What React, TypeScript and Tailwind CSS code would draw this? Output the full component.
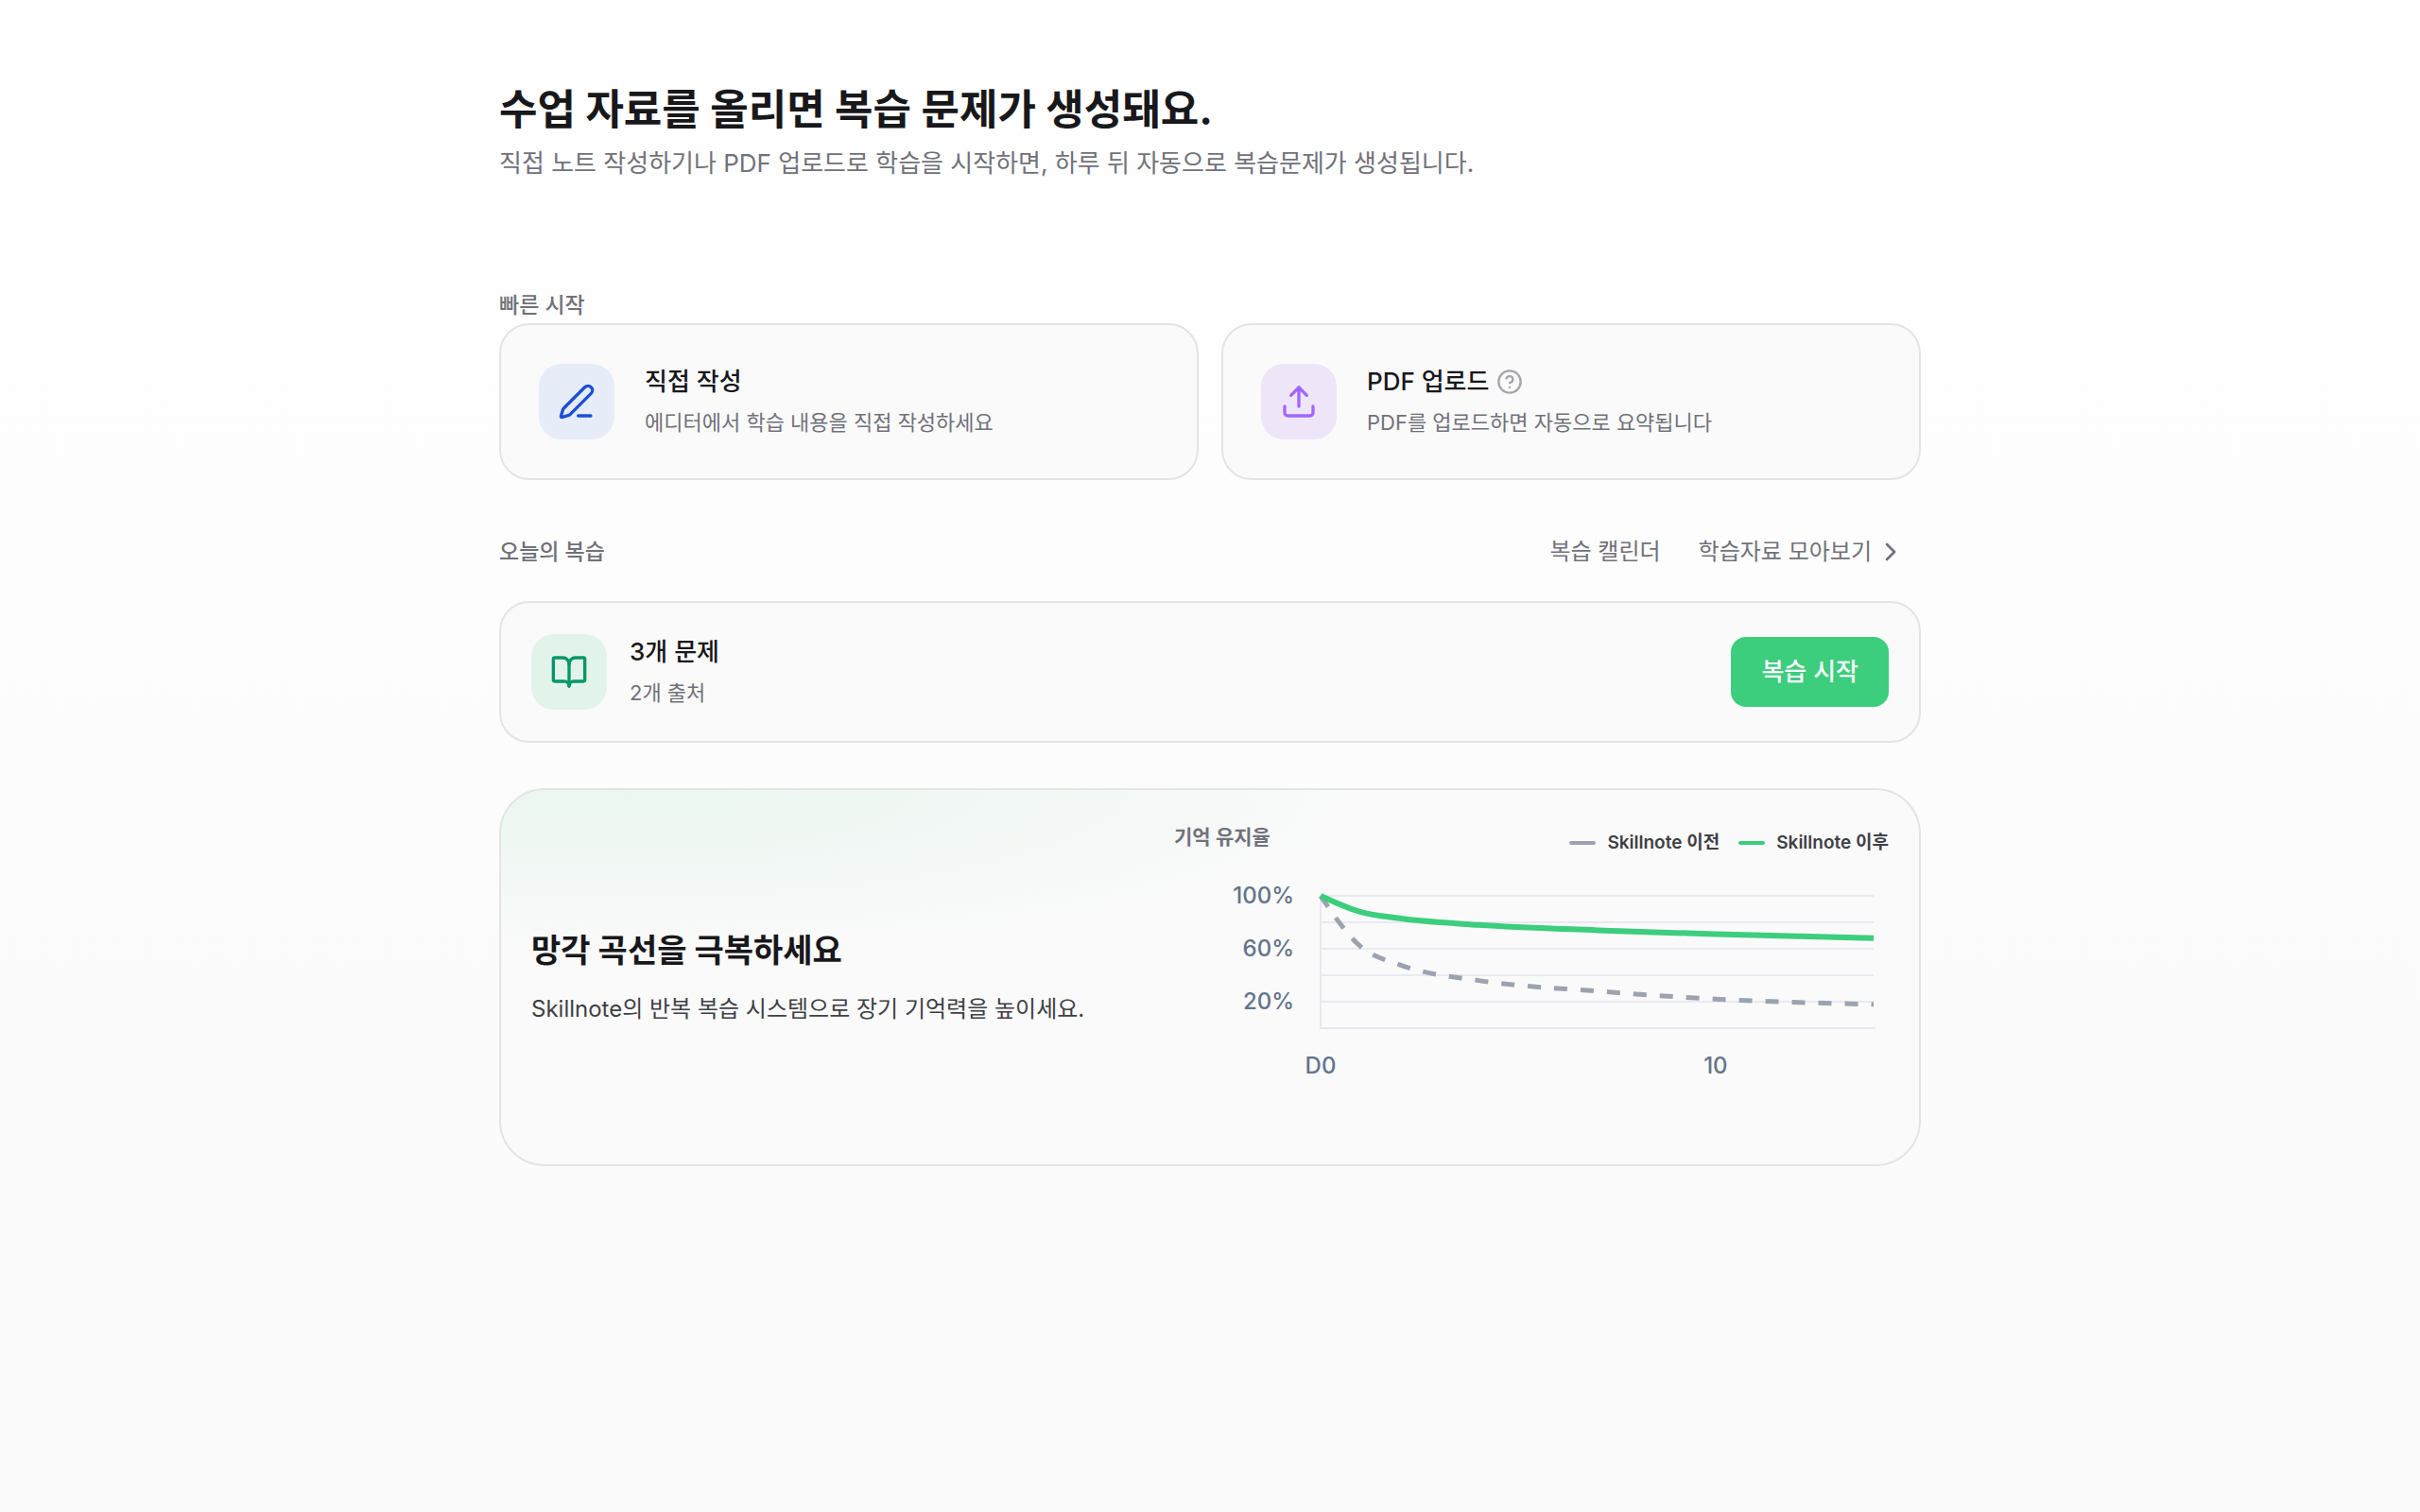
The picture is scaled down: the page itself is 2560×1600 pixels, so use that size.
import type { ReactNode } from 'react';
import { BookOpen, ChevronRight, CircleQuestionMark, PenLine, Upload } from 'lucide-react';

interface Point {
    day: number;
    rate: number;
}

const BEFORE: Point[] = [
    { day: 0, rate: 100 },
    { day: 1, rate: 62 },
    { day: 2, rate: 48 },
    { day: 4, rate: 36 },
    { day: 7, rate: 28 },
    { day: 10, rate: 22 },
    { day: 14, rate: 18 },
];

const AFTER: Point[] = [
    { day: 0, rate: 100 },
    { day: 1, rate: 88 },
    { day: 2, rate: 83 },
    { day: 4, rate: 78 },
    { day: 7, rate: 74 },
    { day: 10, rate: 71 },
    { day: 14, rate: 68 },
];

const PLOT = { left: 155, right: 740, top: 28, bottom: 168 };

const xOf = (day: number) => PLOT.left + ((PLOT.right - PLOT.left) * day) / 14;
const yOf = (rate: number) => PLOT.bottom - ((PLOT.bottom - PLOT.top) * rate) / 100;

// Monotone cubic through the points, so the curve never overshoots the data.
function monotonePath(data: Point[]) {
    const pts = data.map((p) => ({ x: xOf(p.day), y: yOf(p.rate) }));
    const last = pts.length - 1;
    const slope = (i: number) => (pts[i + 1].y - pts[i].y) / (pts[i + 1].x - pts[i].x);
    const tangents = pts.map((_, i) => {
        if (i === 0 || i === last) return 0;
        const h0 = pts[i].x - pts[i - 1].x;
        const h1 = pts[i + 1].x - pts[i].x;
        const s0 = slope(i - 1);
        const s1 = slope(i);
        const p = (s0 * h1 + s1 * h0) / (h0 + h1);
        return (Math.sign(s0) + Math.sign(s1)) * Math.min(Math.abs(s0), Math.abs(s1), 0.5 * Math.abs(p));
    });
    tangents[0] = (3 * slope(0) - tangents[1]) / 2;
    tangents[last] = (3 * slope(last - 1) - tangents[last - 1]) / 2;

    let d = `M${pts[0].x},${pts[0].y}`;
    for (let i = 0; i < last; i++) {
        const dx = (pts[i + 1].x - pts[i].x) / 3;
        d += `C${pts[i].x + dx},${pts[i].y + dx * tangents[i]},${pts[i + 1].x - dx},${pts[i + 1].y - dx * tangents[i + 1]},${pts[i + 1].x},${pts[i + 1].y}`;
    }
    return d;
}

function RetentionChart() {
    return (
        <svg viewBox="0 0 756 230" className="w-full" role="img" aria-label="기억 유지율">
            {[100, 80, 60, 40, 20].map((rate) => (
                <line key={rate} x1={PLOT.left} x2={PLOT.right} y1={yOf(rate)} y2={yOf(rate)} stroke="#e9eaf0" strokeWidth="2" />
            ))}
            <path d={`M${PLOT.left},${PLOT.top}V${PLOT.bottom}H${PLOT.right + 2}`} fill="none" stroke="#e7e8ee" strokeWidth="2" />
            <g fontSize="24" fontWeight="500" fill="#64748b">
                {[100, 60, 20].map((rate) => (
                    <text key={rate} x="127" y={yOf(rate) + 8} textAnchor="end">{rate}%</text>
                ))}
                <text x={xOf(0)} y="216" textAnchor="middle">D0</text>
                <text x={xOf(10)} y="216" textAnchor="middle">10</text>
            </g>
            <path d={monotonePath(BEFORE)} fill="none" stroke="#9ca3af" strokeWidth="5" strokeDasharray="14 14" />
            <path d={monotonePath(AFTER)} fill="none" stroke="#3ccd7d" strokeWidth="6" />
        </svg>
    );
}

interface QuickCardProps {
    icon: ReactNode;
    tile: string;
    title: string;
    desc: string;
    help?: boolean;
}

function QuickCard({ icon, tile, title, desc, help }: QuickCardProps) {
    return (
        <button className="flex items-center gap-8 rounded-[32px] border-2 border-[#e4e4e4] bg-[#fafafa] p-10 text-left">
            <span className={`flex size-20 shrink-0 items-center justify-center rounded-3xl ${tile}`}>{icon}</span>
            <span className="flex flex-col gap-1">
                <span className="flex items-center gap-2 text-[26px] leading-10 font-medium text-[#18181b]">
                    {title}
                    {help && <CircleQuestionMark className="size-7 text-[#a5a5a9]" />}
                </span>
                <span className="text-[22px] leading-[38px] text-[#71717a]">{desc}</span>
            </span>
        </button>
    );
}

export default function App() {
    return (
        <div className="min-h-screen bg-linear-to-b from-white to-[#fafafa] font-[Inter,'Noto_Sans_CJK_KR',sans-serif] text-[#18181b]">
            <main className="mx-auto w-full max-w-[1504px] pt-20">
                <header>
                    <h1 className="text-[44px] leading-[72px] font-bold">수업 자료를 올리면 복습 문제가 생성돼요.</h1>
                    <p className="text-[26px] leading-[42px] text-[#71717a]">
                        직접 노트 작성하기나 PDF 업로드로 학습을 시작하면, 하루 뒤 자동으로 복습문제가 생성됩니다.
                    </p>
                </header>

                <section className="mt-[110px]">
                    <h2 className="text-[23px] leading-[38px] font-medium text-[#71717a]">빠른 시작</h2>
                    <div className="grid grid-cols-2 gap-6">
                        <QuickCard
                            icon={<PenLine className="size-10 text-[#1d4ed8]" />}
                            tile="bg-[#e6ecf8]"
                            title="직접 작성"
                            desc="에디터에서 학습 내용을 직접 작성하세요"
                        />
                        <QuickCard
                            icon={<Upload className="size-10 text-[#9f67ff]" />}
                            tile="bg-[#efe5f9]"
                            title="PDF 업로드"
                            desc="PDF를 업로드하면 자동으로 요약됩니다"
                            help
                        />
                    </div>
                </section>

                <section className="mt-12">
                    <div className="flex items-center justify-between">
                        <h2 className="text-[23px] leading-10 font-medium text-[#71717a]">오늘의 복습</h2>
                        <nav className="flex gap-2 text-2xl leading-[56px] text-[#71717a]">
                            <a href="#calendar" className="px-4">복습 캘린더</a>
                            <a href="#materials" className="flex items-center gap-1 px-4">
                                학습자료 모아보기
                                <ChevronRight className="size-8" />
                            </a>
                        </nav>
                    </div>
                    <div className="mt-6 flex items-center gap-6 rounded-[32px] border-2 border-[#e4e4e4] bg-[#fafafa] p-8">
                        <span className="flex size-20 shrink-0 items-center justify-center rounded-3xl bg-[#e2f4ea]">
                            <BookOpen className="size-10 text-[#059669]" />
                        </span>
                        <div className="flex-1">
                            <div className="text-[26px] leading-10 font-medium">3개 문제</div>
                            <div className="mt-1 text-[22px] leading-[38px] text-[#71717a]">2개 출처</div>
                        </div>
                        <button className="h-[74px] rounded-2xl bg-[#3ccd7d] px-8 text-[26px] leading-10 font-medium text-white">
                            복습 시작
                        </button>
                    </div>
                </section>

                <section className="mt-12 flex min-h-[400px] rounded-[48px] border-2 border-[#e4e4e4] bg-[#fafafa] bg-[radial-gradient(ellipse_55%_44%_at_8%_0%,#eaf6f0,#fafafa)] px-8">
                    <div className="flex flex-1 flex-col justify-center gap-4">
                        <h2 className="text-[34px] leading-[52px] font-bold">망각 곡선을 극복하세요</h2>
                        <p className="text-2xl leading-10 text-[#3f3f46]">Skillnote의 반복 복습 시스템으로 장기 기억력을 높이세요.</p>
                    </div>
                    <div className="w-[756px] pt-8">
                        <div className="flex items-start justify-between">
                            <h3 className="text-[21px] leading-9 font-semibold text-[#71717a]">기억 유지율</h3>
                            <ul className="flex gap-5 pt-1 text-[19px] leading-10 font-semibold text-[#3f3f46]">
                                <li className="flex items-center gap-3">
                                    <span className="h-1 w-7 rounded-full bg-[#9ca3af]" />
                                    Skillnote 이전
                                </li>
                                <li className="flex items-center gap-3">
                                    <span className="h-1 w-7 rounded-full bg-[#3ccd7d]" />
                                    Skillnote 이후
                                </li>
                            </ul>
                        </div>
                        <div className="mt-2">
                            <RetentionChart />
                        </div>
                    </div>
                </section>
            </main>
        </div>
    );
}
